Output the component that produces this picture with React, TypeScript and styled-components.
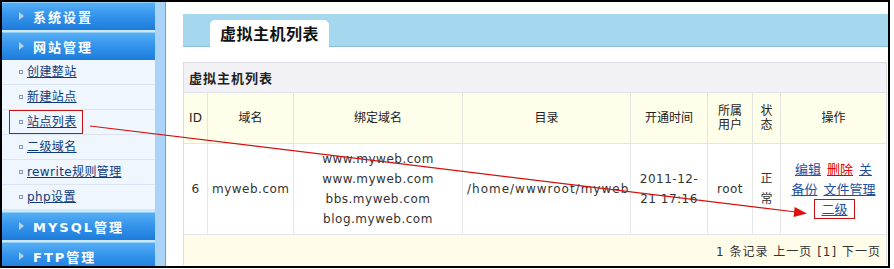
import React from "react";
import styled, { createGlobalStyle } from "styled-components";

const GlobalStyle = createGlobalStyle`
  html, body { margin: 0; padding: 0; background: #ffffff; }
  body { font-family: "DejaVu Sans", "Noto Sans CJK SC", sans-serif; font-size: 12px; color: #333; }
  * { box-sizing: border-box; }
`;

const Wrapper = styled.div`
  position: relative;
  width: 894px;
  height: 269px;
  overflow: hidden;
`;

const Frame = styled.div`
  width: 890px;
  height: 268px;
  border: 2px solid #000;
  display: flex;
  overflow: hidden;
  background: #fff;
`;

const Sidebar = styled.div`
  width: 153px;
  flex: none;
  display: flex;
  flex-direction: column;
  background: #cfe7fb;
`;

const MenuHeader = styled.div<{ $first?: boolean }>`
  flex: none;
  height: 28px;
  margin-top: ${(p) => (p.$first ? "0" : "2px")};
  display: flex;
  align-items: center;
  padding-left: 17px;
  background: linear-gradient(to bottom, #5ab0f5 0%, #3596ec 45%, #1d7cdc 100%);
  box-shadow: inset 0 1px 0 #8fd0fa;
  color: #fff;
  font-family: "DejaVu Sans", "Noto Sans CJK SC", sans-serif;
  font-weight: bold;
  font-size: 13px;
  letter-spacing: 2px;
`;

const Triangle = styled.span`
  width: 0;
  height: 0;
  border-left: 5px solid #bfd0e2;
  border-top: 4.5px solid transparent;
  border-bottom: 4.5px solid transparent;
  margin-right: 9px;
`;

const MenuList = styled.div`
  display: flex;
  flex-direction: column;
`;

const MenuItem = styled.div`
  height: 25px;
  display: flex;
  align-items: center;
  padding-left: 7px;
  background: #eff6fd;
  border-bottom: 1px solid #d9e5f2;
`;

const ItemMark = styled.span<{ $marked?: boolean }>`
  display: inline-flex;
  align-items: center;
  height: 24px;
  padding: 0 5px 0 9px;
  border: 1px solid ${(p) => (p.$marked ? "#cc1111" : "transparent")};
`;

const Bullet = styled.span`
  width: 4px;
  height: 4px;
  border: 1px solid #7f98bb;
  margin-right: 4px;
  flex: none;
`;

const SideLink = styled.a`
  color: #0d3b7d;
  text-decoration: underline;
  font-size: 12px;
  letter-spacing: 0.4px;
  line-height: 16px;
  cursor: pointer;
`;

const Splitter = styled.div`
  width: 11px;
  flex: none;
  background: #a9d4f8;
  border-right: 1px solid #5aa7ea;
`;

const Main = styled.div`
  flex: 1;
  padding: 12px 0 0 17px;
  overflow: hidden;
`;

const TabBar = styled.div`
  height: 33px;
  background: #a5d7ef;
  border-bottom: 1px solid #8cc1dc;
  display: flex;
  align-items: flex-end;
  padding-left: 27px;
`;

const Tab = styled.div`
  width: 119px;
  height: 27px;
  margin-bottom: -1px;
  background: #fff;
  border-radius: 5px 5px 0 0;
  text-align: center;
  line-height: 27px;
  font-size: 16px;
  font-weight: bold;
  letter-spacing: 0.5px;
  color: #111;
  font-family: "Noto Sans CJK SC", sans-serif;
`;

const Panel = styled.div`
  margin-top: 15px;
  width: 704px;
  border: 1px solid #dcdce4;
  border-bottom: none;
`;

const PanelTitle = styled.div`
  height: 30px;
  line-height: 29px;
  background: #f2f2f6;
  border-bottom: 1px solid #e2e2e8;
  padding-left: 5px;
  font-size: 13px;
  font-weight: bold;
  letter-spacing: 1px;
  color: #222;
  font-family: "Noto Sans CJK SC", sans-serif;
`;

const Table = styled.table`
  width: 702px;
  table-layout: fixed;
  border-collapse: separate;
  border-spacing: 0;
`;

const Th = styled.th`
  height: 51px;
  padding: 0 4px;
  background: #fffeea;
  border-right: 1px solid #e6e6e0;
  border-bottom: 1px solid #e6e6e0;
  font-weight: normal;
  font-size: 12px;
  line-height: 14px;
  color: #222;
  text-align: center;
  vertical-align: middle;
  &:last-child { border-right: none; }
`;

const Td = styled.td<{ $align?: "left" | "center"; $spacing?: number }>`
  height: 91px;
  padding: 5px 4px;
  background: #fff;
  border-right: 1px solid #e6e6e6;
  border-bottom: 1px solid #e6e6e6;
  font-size: 12px;
  line-height: 20px;
  color: #333;
  text-align: ${(p) => p.$align || "center"};
  vertical-align: middle;
  letter-spacing: ${(p) => (p.$spacing ?? 0.5)}px;
  white-space: nowrap;
  overflow: hidden;
  &:last-child { border-right: none; }
`;

const FooterCell = styled.td`
  height: 30px;
  padding: 0 5px 0 0;
  background: #fffde9;
  text-align: right;
  vertical-align: middle;
  font-size: 12px;
  color: #333;
  letter-spacing: 1px;
`;

const OpLine = styled.div`
  display: flex;
  justify-content: center;
  gap: 6px;
  height: 20px;
  align-items: center;
  letter-spacing: 0;
`;

const OpLink = styled.a<{ $danger?: boolean }>`
  color: ${(p) => (p.$danger ? "#e60000" : "#1f4f9f")};
  text-decoration: underline;
  font-size: 13px;
  line-height: 18px;
  cursor: pointer;
  font-family: "Noto Sans CJK SC", sans-serif;
`;

const MarkedOp = styled.span`
  display: inline-flex;
  align-items: center;
  height: 20px;
  margin-left: 2px;
  padding: 0 6px;
  border: 1px solid #cc1111;
`;

const Annotation = styled.svg`
  position: absolute;
  left: 0;
  top: 0;
  pointer-events: none;
`;

const menuItems = [
  "创建整站",
  "新建站点",
  "站点列表",
  "二级域名",
  "rewrite规则管理",
  "php设置",
];

export default function App() {
  return (
    <>
      <GlobalStyle />
      <Wrapper>
        <Frame>
          <Sidebar>
            <MenuHeader $first>
              <Triangle />
              系统设置
            </MenuHeader>
            <MenuHeader>
              <Triangle />
              网站管理
            </MenuHeader>
            <MenuList>
              {menuItems.map((label) => (
                <MenuItem key={label}>
                  <ItemMark $marked={label === "站点列表"}>
                    <Bullet />
                    <SideLink>{label}</SideLink>
                  </ItemMark>
                </MenuItem>
              ))}
            </MenuList>
            <MenuHeader>
              <Triangle />
              MYSQL管理
            </MenuHeader>
            <MenuHeader>
              <Triangle />
              FTP管理
            </MenuHeader>
          </Sidebar>
          <Splitter />
          <Main>
            <TabBar>
              <Tab>虚拟主机列表</Tab>
            </TabBar>
            <Panel>
              <PanelTitle>虚拟主机列表</PanelTitle>
              <Table>
                <colgroup>
                  <col style={{ width: 24 }} />
                  <col style={{ width: 86 }} />
                  <col style={{ width: 169 }} />
                  <col style={{ width: 168 }} />
                  <col style={{ width: 77 }} />
                  <col style={{ width: 45 }} />
                  <col style={{ width: 28 }} />
                  <col style={{ width: 105 }} />
                </colgroup>
                <thead>
                  <tr>
                    <Th>ID</Th>
                    <Th>域名</Th>
                    <Th>绑定域名</Th>
                    <Th>目录</Th>
                    <Th>开通时间</Th>
                    <Th>
                      所属
                      <br />
                      用户
                    </Th>
                    <Th>
                      状
                      <br />
                      态
                    </Th>
                    <Th>操作</Th>
                  </tr>
                </thead>
                <tbody>
                  <tr>
                    <Td>6</Td>
                    <Td>myweb.com</Td>
                    <Td>
                      www.myweb.com
                      <br />
                      www.myweb.com
                      <br />
                      bbs.myweb.com
                      <br />
                      blog.myweb.com
                    </Td>
                    <Td $align="left" $spacing={1}>
                      /home/wwwroot/myweb
                    </Td>
                    <Td>
                      2011-12-
                      <br />
                      21 17:16
                    </Td>
                    <Td>root</Td>
                    <Td $spacing={0}>
                      正
                      <br />
                      常
                    </Td>
                    <Td>
                      <OpLine>
                        <OpLink>编辑</OpLink>
                        <OpLink $danger>删除</OpLink>
                        <OpLink>关</OpLink>
                      </OpLine>
                      <OpLine>
                        <OpLink>备份</OpLink>
                        <OpLink>文件管理</OpLink>
                      </OpLine>
                      <OpLine>
                        <MarkedOp>
                          <OpLink>二级</OpLink>
                        </MarkedOp>
                      </OpLine>
                    </Td>
                  </tr>
                  <tr>
                    <FooterCell colSpan={8}>1 条记录 上一页 [1] 下一页</FooterCell>
                  </tr>
                </tbody>
              </Table>
            </Panel>
          </Main>
        </Frame>
        <Annotation width={894} height={269} viewBox="0 0 894 269">
          <line x1={90} y1={126} x2={796} y2={212} stroke="#d41010" strokeWidth={1.2} />
          <polygon points="807,213.5 793.5,217 794.7,207" fill="#e01010" />
        </Annotation>
      </Wrapper>
    </>
  );
}
